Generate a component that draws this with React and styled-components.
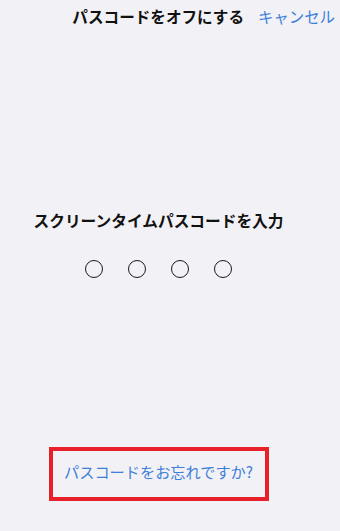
import React from "react";
import styled, { createGlobalStyle } from "styled-components";

const GlobalStyle = createGlobalStyle`
  html, body {
    margin: 0;
    padding: 0;
    background: #f2f1f6;
  }
  body {
    font-family: "Noto Sans CJK JP", "Noto Sans", sans-serif;
  }
`;

const DIGITS = 4;

const App = () => {
  return (
    <Screen>
      <GlobalStyle />
      <Header>
        <HeaderTitle>パスコードをオフにする</HeaderTitle>
        <CancelButton>キャンセル</CancelButton>
      </Header>
      <Prompt>スクリーンタイムパスコードを入力</Prompt>
      <Dots>
        {Array.from({ length: DIGITS }).map((_, i) => (
          <Dot key={i} />
        ))}
      </Dots>
      <ForgotBox>
        <ForgotLink>パスコードをお忘れですか?</ForgotLink>
      </ForgotBox>
    </Screen>
  );
};

export default App;

const Screen = styled.div`
  width: 340px;
  height: 531px;
  box-sizing: border-box;
  padding-right: 23px;
  display: flex;
  flex-direction: column;
  align-items: center;
  background: #f2f1f6;
  overflow: hidden;
`;

const Header = styled.div`
  align-self: stretch;
  height: 32px;
  margin-right: -23px;
  padding-right: 5px;
  display: flex;
  align-items: center;
  justify-content: flex-end;
  gap: 14px;
`;

const HeaderTitle = styled.div`
  font-size: 15.6px;
  font-weight: 700;
  color: #111;
  line-height: 22px;
`;

const CancelButton = styled.div`
  font-size: 15.4px;
  color: #3d7fd9;
  line-height: 22px;
  cursor: pointer;
`;

const Prompt = styled.div`
  margin-top: 178px;
  font-size: 15.7px;
  font-weight: 700;
  color: #111;
  line-height: 22px;
`;

const Dots = styled.div`
  margin-top: 28px;
  display: flex;
  gap: 25px;
`;

const Dot = styled.div`
  width: 18px;
  height: 18px;
  box-sizing: border-box;
  border: 1.4px solid #1a1a1a;
  border-radius: 50%;
`;

const ForgotBox = styled.div`
  margin-top: 169px;
  width: 220px;
  height: 54px;
  box-sizing: border-box;
  border: 4px solid #e8202a;
  padding-top: 9px;
  display: flex;
  justify-content: center;
  align-items: flex-start;
`;

const ForgotLink = styled.div`
  font-size: 15.2px;
  color: #3d7fd9;
  line-height: 22px;
  cursor: pointer;
`;
